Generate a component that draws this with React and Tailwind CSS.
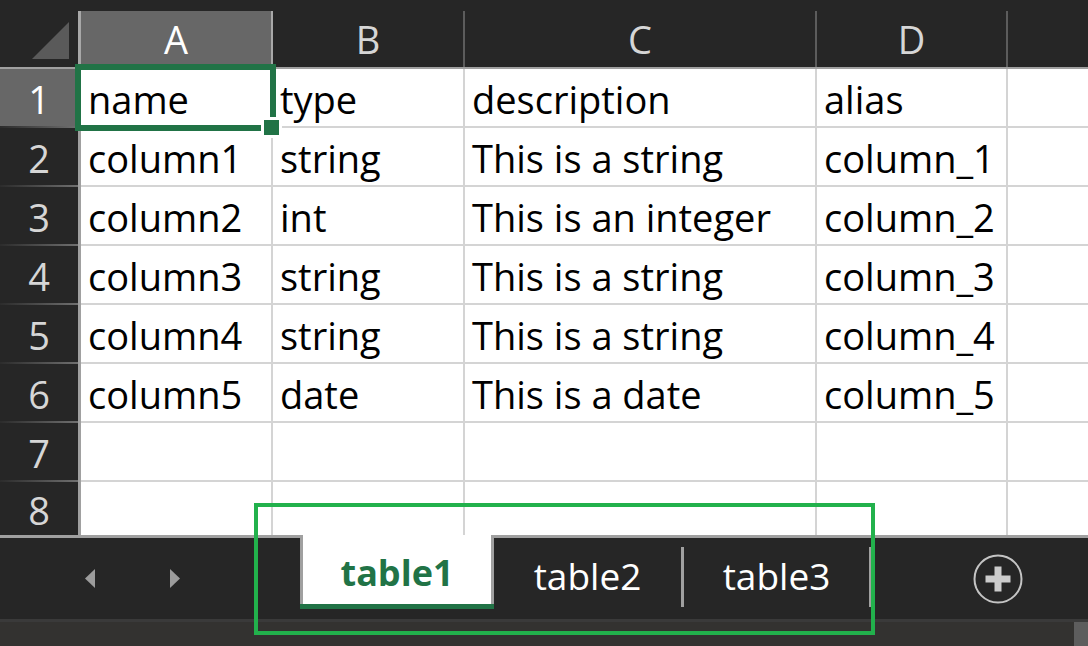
import React from 'react';

const rows = [
  ['name', 'type', 'description', 'alias'],
  ['column1', 'string', 'This is a string', 'column_1'],
  ['column2', 'int', 'This is an integer', 'column_2'],
  ['column3', 'string', 'This is a string', 'column_3'],
  ['column4', 'string', 'This is a string', 'column_4'],
  ['column5', 'date', 'This is a date', 'column_5'],
  ['', '', '', ''],
  ['', '', '', ''],
];

const widths = ['w-[192px]', 'w-[192px]', 'w-[352px]', 'w-[191px]'];

const Cell = ({ w, h, children }) => (
  <div className={`${w} ${h} shrink-0 border-r-2 border-[#d4d4d4] bg-white pl-[7px] overflow-hidden whitespace-nowrap text-[38px] leading-[60px] text-black`}>
    {children}
  </div>
);

const RowHead = ({ n, h, active, last }) => (
  <div className={`w-[81px] ${h} shrink-0 flex flex-col border-r-[3px] border-[#a0a0a0] ${active ? 'bg-[#676767]' : 'bg-[#262626]'}`}>
    <div className={`flex-1 flex items-center justify-center pt-[2px] text-[38px] leading-none ${active ? 'text-white' : 'text-[#d6d6d6]'}`}>{n}</div>
    {!last && <div className="h-[2px] bg-gradient-to-r from-[#2c2c2c] to-[#707070]" />}
  </div>
);

const ColHead = ({ label, w, active }) => (
  <div className={`${w} shrink-0 h-full flex items-center justify-center border-r-2 text-[38px] leading-none ${active ? 'bg-[#676767] text-white border-[#a8a8a8]' : 'bg-[#262626] text-[#d6d6d6] border-[#5c5c5c]'}`}>
    {label}
  </div>
);

export default function App() {
  return (
    <div className="relative w-[1088px] h-[646px] overflow-hidden bg-[#262626] font-['Open_Sans',sans-serif]">
      <div className="h-[11px]" />

      {/* column headers */}
      <div className="flex h-[58px] border-b-2 border-[#a0a0a0]">
        <div className="w-[81px] shrink-0 flex items-end justify-end pr-[9px] pb-[8px] border-r-[3px] border-[#a8a8a8]">
          <svg width="37" height="37" viewBox="0 0 37 37"><polygon points="37,0 37,37 0,37" fill="#5a5a5a" /></svg>
        </div>
        <ColHead label="A" w="w-[192px]" active />
        <ColHead label="B" w="w-[192px]" />
        <ColHead label="C" w="w-[352px]" />
        <ColHead label="D" w="w-[191px]" />
        <div className="flex-1 bg-[#262626]" />
      </div>

      {/* grid */}
      <div className="h-[466px] overflow-hidden">
        {rows.map((r, i) => {
          const last = i === rows.length - 1;
          const h = last ? 'h-[54px]' : 'h-[59px]';
          return (
            <div key={i} className="flex">
              <RowHead n={i + 1} h={h} active={i === 0} last={last} />
              <div className={`flex-1 flex bg-white ${last ? '' : 'border-b-2 border-[#d4d4d4]'}`}>
                {r.map((v, j) => (
                  <Cell key={j} w={widths[j]} h={last ? 'h-[54px]' : 'h-[57px]'}>{v}</Cell>
                ))}
              </div>
            </div>
          );
        })}
      </div>

      {/* sheet tabs */}
      <div className="h-[84px] flex border-t-[3px] border-[#a0a0a0] bg-[#262626]">
        <div className="w-[300px] shrink-0 flex items-center pl-[85px] gap-[75px]">
          <svg width="10" height="19" viewBox="0 0 10 19"><polygon points="10,0 10,19 0,9.5" fill="#9c9c9c" /></svg>
          <svg width="10" height="19" viewBox="0 0 10 19"><polygon points="0,0 0,19 10,9.5" fill="#9c9c9c" /></svg>
        </div>
        <div className="w-[194px] shrink-0 -mt-[3px] h-[74px] flex flex-col">
          <div className="flex-1 flex items-center justify-center pt-[6px] bg-white border-x-[3px] border-[#a0a0a0] text-[36px] leading-none font-bold text-[#217346]">
            table1
          </div>
          <div className="h-[5px] bg-[#217346]" />
        </div>
        <div className="w-[187px] shrink-0 h-[71px] flex items-center justify-center pt-[4px] text-[37px] leading-none text-white">table2</div>
        <div className="w-[3px] h-[60px] mt-[9px] bg-[#a0a0a0]" />
        <div className="w-[185px] shrink-0 h-[71px] flex items-center justify-center pt-[4px] text-[37px] leading-none text-white">table3</div>
        <div className="w-[2px] h-[60px] mt-[9px] bg-[#a0a0a0]" />
        <div className="ml-[102px] flex items-center">
          <svg width="50" height="50" viewBox="0 0 50 50">
            <circle cx="25" cy="25" r="23.5" fill="none" stroke="#c4c4c4" strokeWidth="2" />
            <rect x="12.5" y="21.5" width="25" height="7" fill="#cccccc" />
            <rect x="21.5" y="12.5" width="7" height="25" fill="#cccccc" />
          </svg>
        </div>
      </div>

      {/* scrollbar strip */}
      <div className="h-[27px] flex border-t-[3px] border-[#3a3a3a] bg-[#333230]">
        <div className="flex-1" />
        <div className="w-[14px] bg-[#5d5d5d]" />
      </div>

      {/* selected cell A1 */}
      <div className="absolute left-[75px] top-[64px] w-[201px] h-[67px] border-[6px] border-[#217346] pointer-events-none" />
      <div className="absolute left-[261px] top-[117px] w-[21px] h-[21px] bg-[#217346] border-[3px] border-white pointer-events-none" />

      {/* annotation frame */}
      <div className="absolute left-[254px] top-[503px] w-[621px] h-[132px] border-4 border-[#22b14c] pointer-events-none" />
    </div>
  );
}
